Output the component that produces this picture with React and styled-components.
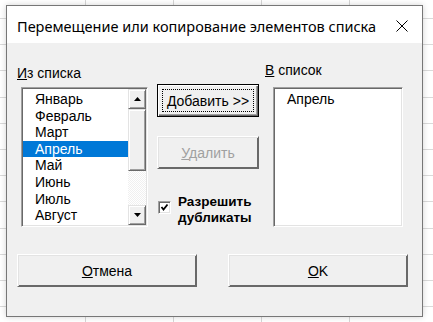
import React from 'react';
import styled, { createGlobalStyle } from 'styled-components';

const GlobalStyle = createGlobalStyle`
  html, body {
    margin: 0;
    padding: 0;
  }
  body {
    width: 433px;
    height: 322px;
    overflow: hidden;
    background-color: #ffffff;
    background-image:
      repeating-linear-gradient(90deg, transparent 0, transparent 85px, #d6d6d6 85px, #d6d6d6 86px, transparent 86px, transparent 88px),
      repeating-linear-gradient(180deg, transparent 0, transparent 18px, #dadada 18px, #dadada 19px, transparent 19px, transparent 26.2px);
    font-family: "Liberation Sans", Arial, sans-serif;
  }
`;

const Dialog = styled.div`
  box-sizing: border-box;
  margin: 5px 0 0 6px;
  width: 417px;
  height: 312px;
  border: 1px solid #777777;
  box-shadow: 0 0 6px rgba(0, 0, 0, 0.18);
  display: flex;
  flex-direction: column;
  background: #f0f0f0;
`;

const TitleBar = styled.div`
  height: 37px;
  background: #ffffff;
  display: flex;
  align-items: center;
  justify-content: space-between;
  padding: 2px 14px 0 10px;
  box-sizing: border-box;
`;

const Title = styled.span`
  font-family: "Noto Sans", "Open Sans", sans-serif;
  font-size: 14.5px;
  color: #000;
`;

const Body = styled.div`
  flex: 1;
  display: flex;
  flex-direction: column;
  padding-left: 10px;
  font-size: 14px;
  color: #000;
`;

const Main = styled.div`
  display: flex;
  align-items: flex-start;
`;

const Column = styled.div`
  display: flex;
  flex-direction: column;
  align-items: flex-start;
  width: ${(p) => p.$width}px;
  margin-left: ${(p) => p.$left || 0}px;
  padding-top: ${(p) => p.$top}px;
`;

const Label = styled.div`
  line-height: 16px;
  height: 16px;
  margin-bottom: ${(p) => p.$gap}px;
`;

const ListBox = styled.div`
  box-sizing: border-box;
  width: ${(p) => p.$width}px;
  height: 140px;
  margin-left: ${(p) => p.$indent}px;
  background: #ffffff;
  border-top: 1px solid #a0a0a0;
  border-left: 1px solid #a0a0a0;
  border-right: 1px solid #ffffff;
  border-bottom: 1px solid #ffffff;
  box-shadow: inset 1px 1px 0 #696969, inset -1px -1px 0 #e3e3e3;
  padding: 1px;
  display: flex;
`;

const Items = styled.div`
  flex: 1;
  padding-top: 2px;
  overflow: hidden;
`;

const Item = styled.div`
  height: 16.6px;
  line-height: 16.6px;
  padding-left: 12px;
  white-space: nowrap;
  background: ${(p) => (p.$selected ? '#0078d7' : 'transparent')};
  color: ${(p) => (p.$selected ? '#ffffff' : '#000000')};
`;

const ScrollBar = styled.div`
  width: 18px;
  display: flex;
  flex-direction: column;
  background-color: #ffffff;
  background-image: repeating-conic-gradient(#f0f0f0 0 25%, #ffffff 0 50%);
  background-size: 2px 2px;
`;

const Raised = styled.div`
  box-sizing: border-box;
  background: #f0f0f0;
  border-top: 1px solid #e3e3e3;
  border-left: 1px solid #e3e3e3;
  border-right: 1px solid #696969;
  border-bottom: 1px solid #696969;
  box-shadow: inset 1px 1px 0 #ffffff, inset -1px -1px 0 #a0a0a0;
  display: flex;
  align-items: center;
  justify-content: center;
  height: ${(p) => p.$h}px;
  margin-bottom: ${(p) => p.$mb || 0}px;
`;

const Track = styled.div`
  flex: 1;
`;

const Arrow = ({ down }) => (
  <svg width="7" height="4" viewBox="0 0 7 4">
    <polygon points={down ? '0,0 7,0 3.5,4' : '0,4 7,4 3.5,0'} fill="#000" />
  </svg>
);

const Button = styled.button`
  box-sizing: border-box;
  width: ${(p) => p.$width}px;
  height: 33px;
  margin-bottom: ${(p) => p.$mb || 0}px;
  padding: 0;
  font-family: "Liberation Sans", Arial, sans-serif;
  font-size: 14px;
  background: #f0f0f0;
  color: ${(p) => (p.disabled ? '#a0a0a0' : '#000000')};
  border-top: 1px solid ${(p) => (p.$default ? '#000' : '#ffffff')};
  border-left: 1px solid ${(p) => (p.$default ? '#000' : '#ffffff')};
  border-right: 1px solid ${(p) => (p.$default ? '#000' : '#696969')};
  border-bottom: 1px solid ${(p) => (p.$default ? '#000' : '#696969')};
  box-shadow: ${(p) =>
    p.$default
      ? 'inset 1px 1px 0 #ffffff, inset -1px -1px 0 #696969, inset -2px -2px 0 #a0a0a0'
      : 'inset 1px 1px 0 #e3e3e3, inset -1px -1px 0 #696969'};
  display: flex;
  align-items: center;
  justify-content: center;
  position: relative;
  cursor: default;
`;

const FocusRing = styled.span`
  position: absolute;
  inset: 4px 4px 4px 4px;
  border: 1px dotted #000;
  pointer-events: none;
`;

const CheckRow = styled.label`
  display: flex;
  align-items: flex-start;
  margin-left: 1px;
`;

const CheckBox = styled.span`
  box-sizing: border-box;
  width: 13px;
  height: 13px;
  margin-top: 7px;
  background: #ffffff;
  border-top: 1px solid #a0a0a0;
  border-left: 1px solid #a0a0a0;
  border-right: 1px solid #ffffff;
  border-bottom: 1px solid #ffffff;
  box-shadow: inset 1px 1px 0 #696969, inset -1px -1px 0 #e3e3e3;
  display: flex;
  align-items: center;
  justify-content: center;
`;

const CheckText = styled.span`
  margin-left: 7px;
  font-weight: bold;
  font-size: 13.5px;
  line-height: 16px;
`;

const ButtonRow = styled.div`
  display: flex;
  gap: 31px;
  margin-top: 27px;
`;

const months = ['Январь', 'Февраль', 'Март', 'Апрель', 'Май', 'Июнь', 'Июль', 'Август'];

export default function App() {
  return (
    <>
      <GlobalStyle />
      <Dialog>
        <TitleBar>
          <Title>Перемещение или копирование элементов списка</Title>
          <svg width="12" height="12" viewBox="0 0 12 12">
            <path d="M0.5 0.5 L11.5 11.5 M11.5 0.5 L0.5 11.5" stroke="#000" strokeWidth="1" />
          </svg>
        </TitleBar>
        <Body>
          <Main>
            <Column $width={132} $top={22}>
              <Label $gap={6}>
                <u>И</u>з списка
              </Label>
              <ListBox $width={127} $indent={4}>
                <Items>
                  {months.map((m) => (
                    <Item key={m} $selected={m === 'Апрель'}>
                      {m}
                    </Item>
                  ))}
                </Items>
                <ScrollBar>
                  <Raised $h={20}>
                    <Arrow />
                  </Raised>
                  <Raised $h={62} />
                  <Track />
                  <Raised $h={20}>
                    <Arrow down />
                  </Raised>
                </ScrollBar>
              </ListBox>
            </Column>
            <Column $width={102} $left={8} $top={41}>
              <Button $width={102} $mb={19} $default>
                <FocusRing />
                <span>
                  <u>Д</u>обавить &gt;&gt;
                </span>
              </Button>
              <Button $width={102} $mb={25} disabled>
                <span>
                  <u>У</u>далить
                </span>
              </Button>
              <CheckRow>
                <CheckBox>
                  <svg width="9" height="9" viewBox="0 0 9 9">
                    <polyline points="1.5,4 3.5,6.5 7.5,1.5" fill="none" stroke="#000" strokeWidth="1.8" />
                  </svg>
                </CheckBox>
                <CheckText>
                  Разрешить
                  <br />
                  <u>д</u>убликаты
                </CheckText>
              </CheckRow>
            </Column>
            <Column $width={138} $left={6} $top={19}>
              <Label $gap={9}>
                <u>В</u> список
              </Label>
              <ListBox $width={130} $indent={8}>
                <Items>
                  <Item>Апрель</Item>
                </Items>
              </ListBox>
            </Column>
          </Main>
          <ButtonRow>
            <Button $width={180}>
              <span>
                <u>О</u>тмена
              </span>
            </Button>
            <Button $width={180}>
              <span>
                <u>О</u>K
              </span>
            </Button>
          </ButtonRow>
        </Body>
      </Dialog>
    </>
  );
}
